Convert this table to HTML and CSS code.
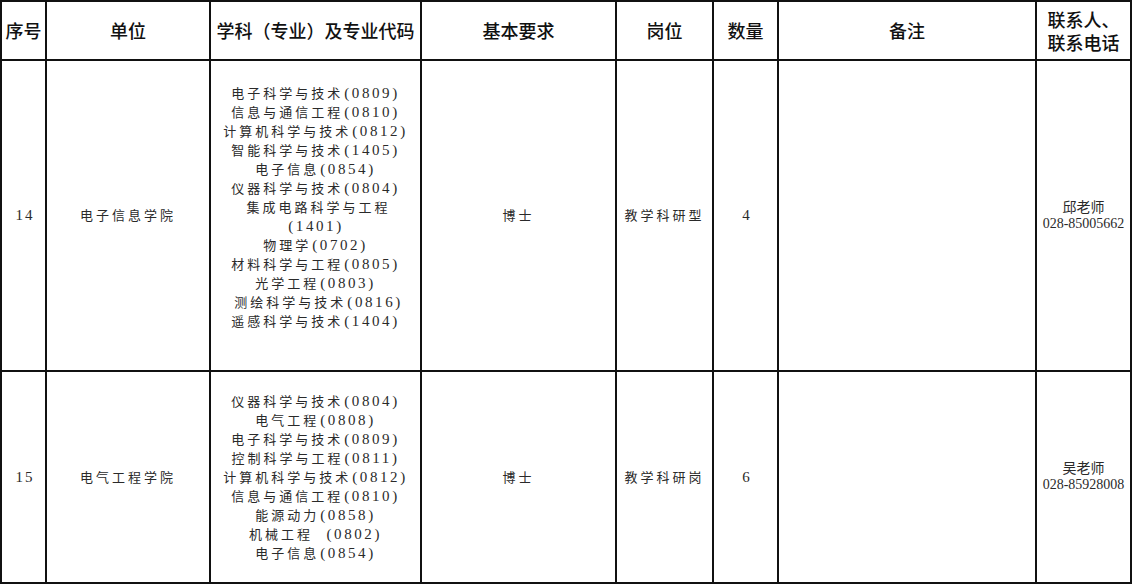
FILE: index.html
```html
<!DOCTYPE html>
<html lang="zh-CN">
<head>
<meta charset="utf-8">
<title>岗位需求表</title>
<link rel="stylesheet" href="styles.css">
</head>
<body>
<table class="grid">
  <colgroup>
    <col class="c-no">
    <col class="c-unit">
    <col class="c-subj">
    <col class="c-req">
    <col class="c-post">
    <col class="c-num">
    <col class="c-note">
    <col class="c-contact">
  </colgroup>
  <thead>
    <tr class="head-row">
      <th>序号</th>
      <th>单位</th>
      <th>学科（专业）及专业代码</th>
      <th>基本要求</th>
      <th>岗位</th>
      <th>数量</th>
      <th>备注</th>
      <th class="wrap-head"><span class="hl">联系人、</span><span class="hl">联系电话</span></th>
    </tr>
  </thead>
  <tbody>
    <tr class="row-a">
      <td class="num">14</td>
      <td>电子信息学院</td>
      <td class="subjects lift">电子科学与技术<span class="code">(0809)</span><br>信息与通信工程<span class="code">(0810)</span><br>计算机科学与技术<span class="code">(0812)</span><br>智能科学与技术<span class="code">(1405)</span><br>电子信息<span class="code">(0854)</span><br>仪器科学与技术<span class="code">(0804)</span><br>&nbsp;集成电路科学与工程<br><span class="code">(1401)</span><br>物理学<span class="code">(0702)</span><br>材料科学与工程<span class="code">(0805)</span><br>光学工程<span class="code">(0803)</span><br>&nbsp;测绘科学与技术<span class="code">(0816)</span><br>遥感科学与技术<span class="code">(1404)</span></td>
      <td>博士</td>
      <td>教学科研型</td>
      <td class="num">4</td>
      <td></td>
      <td class="contact">邱老师<br>028-85005662</td>
    </tr>
    <tr class="row-b">
      <td class="num">15</td>
      <td>电气工程学院</td>
      <td class="subjects">仪器科学与技术<span class="code">(0804)</span><br>电气工程<span class="code">(0808)</span><br>电子科学与技术<span class="code">(0809)</span><br>控制科学与工程<span class="code">(0811)</span><br>计算机科学与技术<span class="code">(0812)</span><br>信息与通信工程<span class="code">(0810)</span><br>能源动力<span class="code">(0858)</span><br>机械工程 &nbsp;<span class="code">(0802)</span><br>电子信息<span class="code">(0854)</span></td>
      <td>博士</td>
      <td>教学科研岗</td>
      <td class="num">6</td>
      <td></td>
      <td class="contact">吴老师<br>028-85928008</td>
    </tr>
  </tbody>
</table>
</body>
</html>
```

FILE: styles.css
```css
html, body {
  margin: 0;
  padding: 0;
  background: #ffffff;
}

.grid {
  border-collapse: collapse;
  table-layout: fixed;
  width: 1132px;
  font-family: "Liberation Serif", "Noto Sans CJK SC", serif;
  color: #2a2a2a;
}

.c-no { width: 45px; }
.c-unit { width: 164px; }
.c-subj { width: 211px; }
.c-req { width: 195px; }
.c-post { width: 97px; }
.c-num { width: 65px; }
.c-note { width: 258px; }
.c-contact { width: 95px; }

.grid th,
.grid td {
  border: 2px solid #111111;
  padding: 0;
  text-align: center;
  vertical-align: middle;
}

.grid th {
  font-family: "Noto Sans CJK SC", "Liberation Sans", sans-serif;
  font-size: 18px;
  font-weight: 500;
  color: #111111;
  line-height: 23px;
}

.hl {
  display: block;
  height: 23px;
  line-height: 23px;
}

.grid td {
  font-size: 13px;
  letter-spacing: 3px;
  line-height: 19px;
  white-space: nowrap;
}

.head-row { height: 59px; }
.row-a { height: 311px; }
.row-b { height: 212px; }

.wrap-head {
  padding-top: 2px;
}

.subjects {
  line-height: 19.1px;
}

.subjects.lift {
  padding-bottom: 17px;
}

.code {
  font-size: 15px;
  letter-spacing: 2.6px;
  padding-left: 1px;
}

.grid td.num {
  font-size: 15px;
  letter-spacing: 2px;
  padding-left: 3px;
}

.grid td.contact {
  font-size: 14px;
  letter-spacing: 0;
  line-height: 16px;
}
```
